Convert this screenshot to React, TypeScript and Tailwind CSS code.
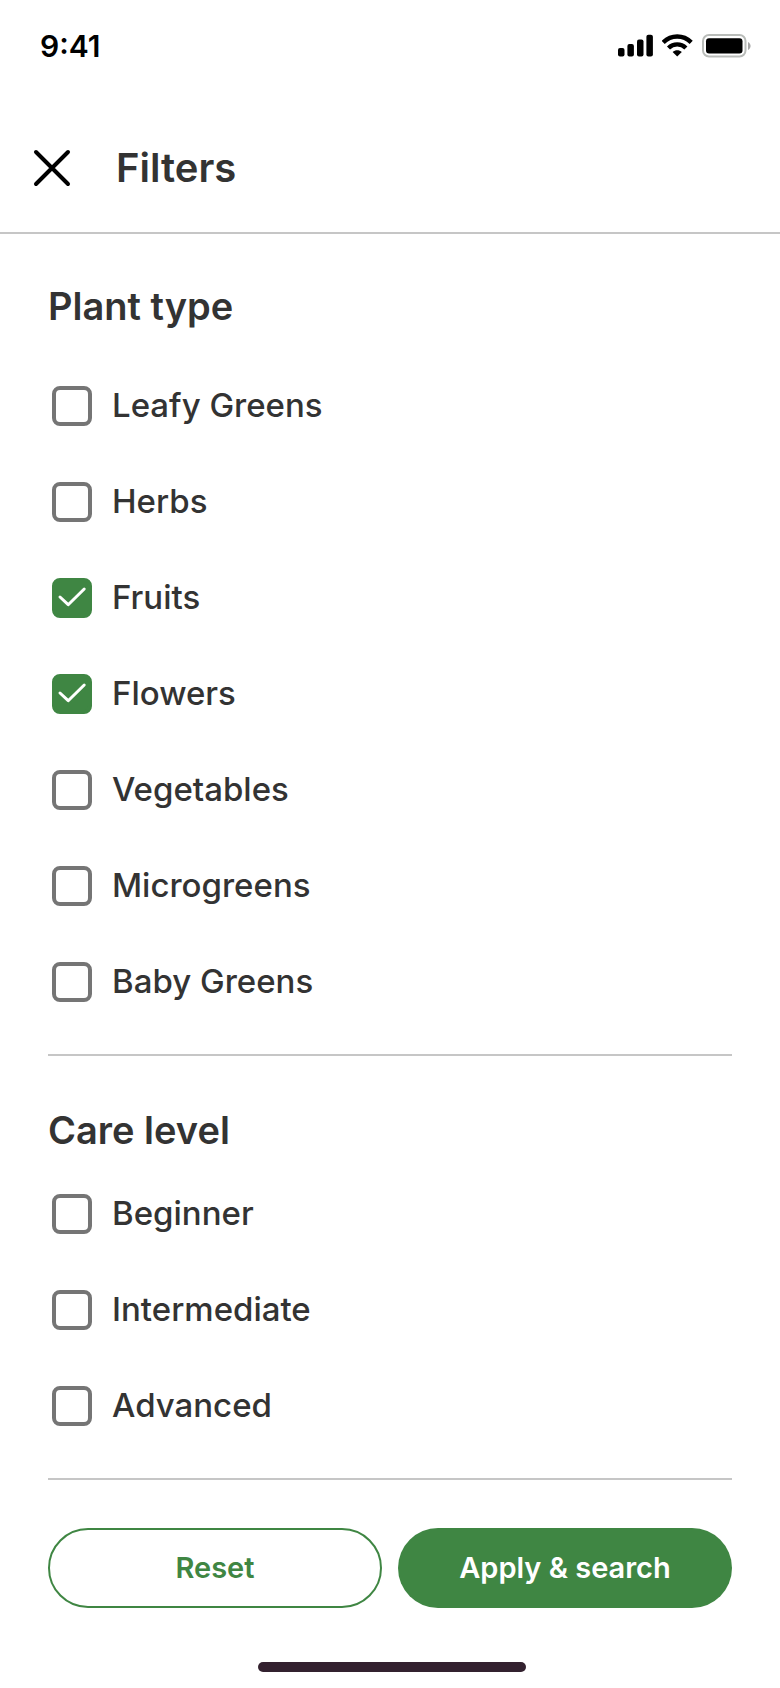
import { useState } from 'react';

const PLANT_TYPES = [
  'Leafy Greens',
  'Herbs',
  'Fruits',
  'Flowers',
  'Vegetables',
  'Microgreens',
  'Baby Greens',
];

const CARE_LEVELS = ['Beginner', 'Intermediate', 'Advanced'];

interface FilterOptionProps {
  label: string;
  checked: boolean;
  onChange: () => void;
}

function FilterOption({ label, checked, onChange }: FilterOptionProps) {
  return (
    <label className="flex h-24 cursor-pointer items-center gap-5 pl-1 text-[33px] font-medium">
      <span className="grid size-10 shrink-0">
        <input
          type="checkbox"
          checked={checked}
          onChange={onChange}
          className="peer col-start-1 row-start-1 size-10 cursor-pointer appearance-none rounded-lg border-4 border-[#757575] checked:border-[#3f8643] checked:bg-[#3f8643]"
        />
        <svg
          viewBox="0 0 40 40"
          fill="none"
          aria-hidden="true"
          className="pointer-events-none invisible col-start-1 row-start-1 size-10 peer-checked:visible"
        >
          <path
            d="M8 19L16.2 26.7L32.2 11"
            stroke="white"
            strokeWidth="3"
            strokeLinecap="round"
            strokeLinejoin="round"
          />
        </svg>
      </span>
      {label}
    </label>
  );
}

function StatusBar() {
  return (
    <div className="flex h-[92px] items-center justify-between pr-7 pl-10 text-black">
      <span className="text-[30px] leading-9 font-semibold">9:41</span>
      <div className="flex items-center gap-2">
        {/* Signal */}
        <svg viewBox="0 0 36 24" fill="currentColor" aria-hidden="true" className="h-6 w-9">
          <rect x="0" y="14" width="6.5" height="8.5" rx="2" />
          <rect x="9.4" y="10" width="6.5" height="12.5" rx="2" />
          <rect x="19" y="5.5" width="6.5" height="17" rx="2" />
          <rect x="28.4" y="0.8" width="6.5" height="21.7" rx="2" />
        </svg>
        {/* Wi-Fi */}
        <svg viewBox="0 0 32 24" fill="none" aria-hidden="true" className="h-6 w-8">
          <path
            d="M1.2 8.4C9.1 0.6 21.3 0.6 29.2 8.4M6.5 14C11.5 9.2 18.9 9.2 23.9 14"
            stroke="currentColor"
            strokeWidth="4.4"
          />
          <path
            d="M15.2 22.6L10.6 18C13.3 15.7 17.1 15.7 19.8 18L15.2 22.6Z"
            fill="currentColor"
          />
        </svg>
        {/* Battery */}
        <svg viewBox="0 0 50 24" fill="none" aria-hidden="true" className="h-6 w-[50px]">
          <rect x="1" y="1" width="42.5" height="21.5" rx="6" stroke="#b9bcb9" strokeWidth="2" />
          <rect x="4" y="4.2" width="36.5" height="15.2" rx="3" fill="currentColor" />
          <path d="M46 8C49.4 9.4 49.4 14.6 46 16V8Z" fill="#a6a6a6" />
        </svg>
      </div>
    </div>
  );
}

export default function App() {
  const [selected, setSelected] = useState<string[]>(['Fruits', 'Flowers']);

  const toggle = (option: string) => {
    setSelected((prev) =>
      prev.includes(option) ? prev.filter((item) => item !== option) : [...prev, option]
    );
  };

  const renderOptions = (options: string[]) =>
    options.map((option) => (
      <FilterOption
        key={option}
        label={option}
        checked={selected.includes(option)}
        onChange={() => toggle(option)}
      />
    ));

  return (
    <div className="flex min-h-screen flex-col bg-white font-['Inter',sans-serif] text-[#333333]">
      <StatusBar />

      <header className="flex items-center gap-11 border-b-2 border-[#c6c6c6] px-8 pt-[52px] pb-10">
        <button type="button" aria-label="Close" className="cursor-pointer text-black">
          <svg viewBox="0 0 40 40" fill="none" aria-hidden="true" className="size-10">
            <path
              d="M4 4L36 36M36 4L4 36"
              stroke="currentColor"
              strokeWidth="4"
              strokeLinecap="round"
            />
          </svg>
        </button>
        <h1 className="text-[40px] leading-[48px] font-semibold">Filters</h1>
      </header>

      <main className="px-12">
        <section className="border-b-2 border-[#c6c6c6] pt-11 pb-6">
          <h2 className="mb-6 text-[38px] leading-[56px] font-semibold">Plant type</h2>
          {renderOptions(PLANT_TYPES)}
        </section>

        <section className="border-b-2 border-[#c6c6c6] pt-[46px] pb-6">
          <h2 className="mb-2 text-[38px] leading-[56px] font-semibold">Care level</h2>
          {renderOptions(CARE_LEVELS)}
        </section>

        <div className="grid grid-cols-2 gap-4 pt-12 text-[29px] font-semibold">
          <button
            type="button"
            onClick={() => setSelected([])}
            className="h-20 cursor-pointer rounded-full border-2 border-[#3f8643] text-[#3f8643]"
          >
            Reset
          </button>
          <button type="button" className="h-20 cursor-pointer rounded-full bg-[#3f8643] text-white">
            Apply &amp; search
          </button>
        </div>
      </main>

      {/* Home indicator */}
      <div className="mt-auto flex justify-center pb-4 pl-1">
        <div className="h-[10px] w-[268px] rounded-full bg-[#33212f]" />
      </div>
    </div>
  );
}
